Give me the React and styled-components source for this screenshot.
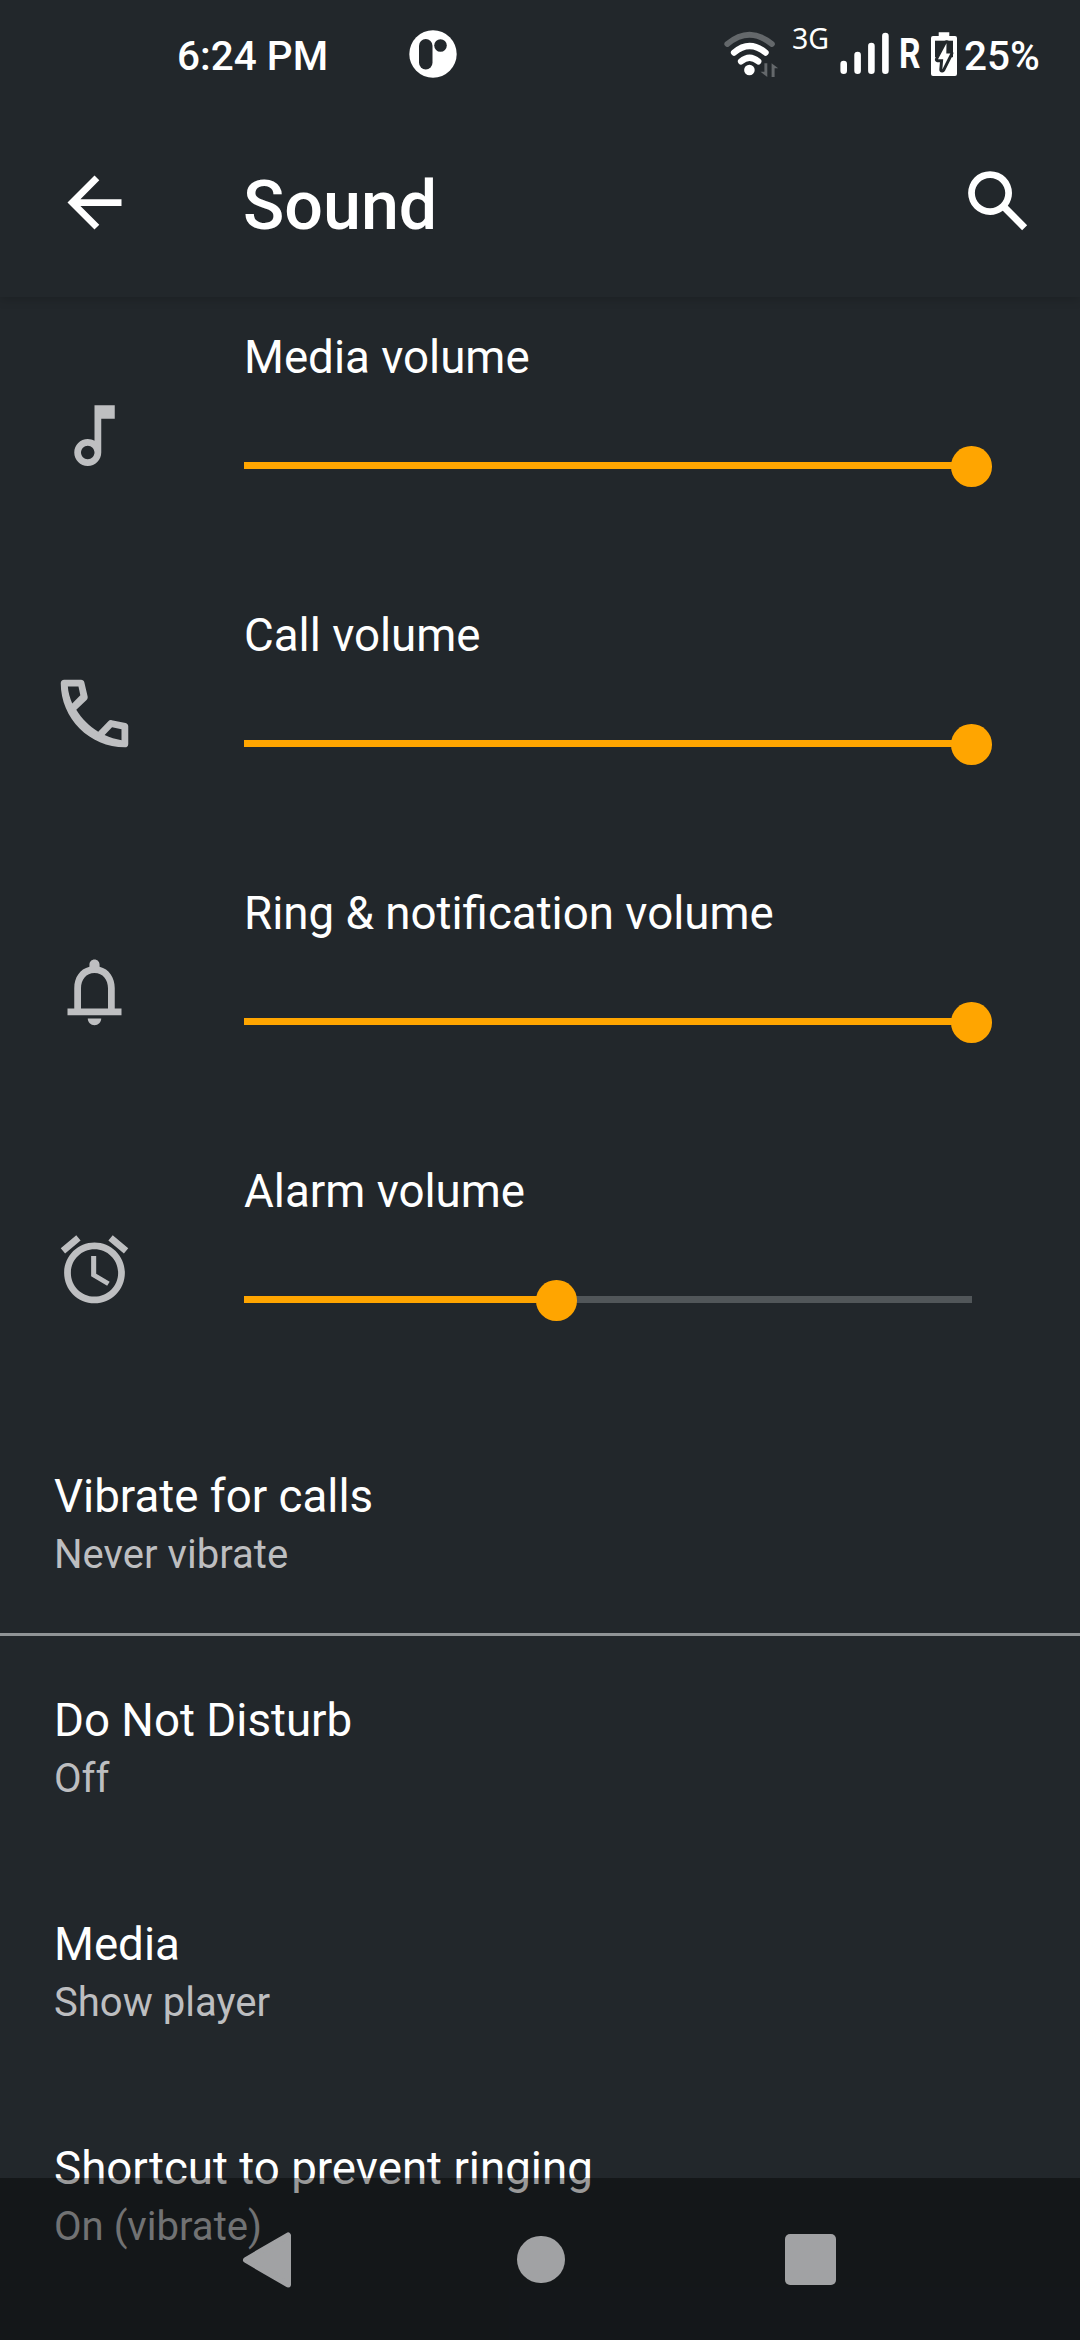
import React from 'react'
import styled, { createGlobalStyle } from 'styled-components'

const volumes = [
  { id: 'media', label: 'Media volume', value: 100, icon: 'music' },
  { id: 'call', label: 'Call volume', value: 100, icon: 'phone' },
  { id: 'ring', label: 'Ring & notification volume', value: 100, icon: 'bell' },
  { id: 'alarm', label: 'Alarm volume', value: 43, icon: 'alarm' },
]

const preferences = [
  { id: 'vibrate', title: 'Vibrate for calls', summary: 'Never vibrate' },
  { id: 'dnd', title: 'Do Not Disturb', summary: 'Off', divider: true },
  { id: 'player', title: 'Media', summary: 'Show player' },
  { id: 'shortcut', title: 'Shortcut to prevent ringing', summary: 'On (vibrate)' },
]

const icons = {
  back: 'M20 11H7.83l5.59-5.59L12 4l-8 8 8 8 1.41-1.41L7.83 13H20v-2z',
  search:
    'M20.49 19l-5.73-5.73C15.53 12.2 16 10.91 16 9.5A6.5 6.5 0 1 0 9.5 16c1.41 0 2.7-.47 3.77-1.24L19 20.49 20.49 19zM5 9.5C5 7.01 7.01 5 9.5 5S14 7.01 14 9.5 11.99 14 9.5 14 5 11.99 5 9.5z',
  music:
    'M12 3v10.55c-.59-.34-1.27-.55-2-.55-2.21 0-4 1.79-4 4s1.79 4 4 4 4-1.79 4-4V7h4V3h-6zM10 19c-1.1 0-2-.9-2-2s.9-2 2-2 2 .9 2 2-.9 2-2 2z',
  phone:
    'M3 2h5c.5 0 .9.3 1 .8l.95 4.1c.1.4 0 .8-.3 1.1L6.6 10.9c1.6 2.7 3.9 4.9 6.5 6.5l3-3.1c.3-.3.6-.4 1-.3l4.1.8c.5.1.8.5.8 1V21c0 .6-.4 1-1 1C10.6 22 2 13.4 2 3c0-.6.4-1 1-1zM4.1 4c.1 1.7.6 3.4 1.3 5l2.4-2.4L7.25 4H4.1zM20 16.7l-2.8-.65L15 18.4c1.6.8 3.3 1.3 5 1.5v-3.2z',
  bell:
    'M18 17v-6c0-3.07-1.63-5.64-4.5-6.32V4c0-.83-.67-1.5-1.5-1.5s-1.5.67-1.5 1.5v.68C7.64 5.36 6 7.92 6 11v6H4v2h16v-2h-2zm-2 0H8v-6c0-2.48 1.51-4.5 4-4.5s4 2.02 4 4.5v6zM12 22c1.1 0 2-.9 2-2h-4c0 1.1.89 2 2 2z',
  alarm:
    'M22 5.72l-4.6-3.86-1.29 1.53 4.6 3.86L22 5.72zM7.88 3.39L6.6 1.86 2 5.71l1.29 1.53 4.59-3.85zM12.5 8H11v6l4.75 2.85.75-1.23-4-2.37V8zM12 4c-4.97 0-9 4.03-9 9s4.02 9 9 9c4.97 0 9-4.03 9-9s-4.03-9-9-9zm0 16c-3.87 0-7-3.13-7-7s3.13-7 7-7 7 3.13 7 7-3.13 7-7 7z',
}

const Icon = ({ name }) => (
  <svg viewBox='0 0 24 24' width='81' height='81' fill='currentColor'>
    <path fillRule='evenodd' d={icons[name]} />
  </svg>
)

const AppLogo = () => (
  <svg width='48' height='48' viewBox='0 0 48 48'>
    <circle cx='24' cy='24' r='23.7' fill='#fff' />
    <rect x='10' y='9' width='13.5' height='30.5' rx='6.75' fill='#22272b' />
    <circle cx='31.5' cy='15.5' r='6.3' fill='#22272b' />
  </svg>
)

const Wifi = () => (
  <svg width='64' height='52' viewBox='720 28 64 52' fill='none' strokeLinecap='round'>
    <path d='M727.3 44Q749.5 25.5 771.9 44' stroke='#64686b' strokeWidth='5.8' />
    <path d='M734 52.6Q749.5 39.4 765.6 52.6' stroke='#fff' strokeWidth='6.2' />
    <path d='M741 61.4Q749.5 54 758.3 61.4' stroke='#fff' strokeWidth='6.2' />
    <circle cx='749.4' cy='70' r='5.3' fill='#fff' />
    <path d='M767.3 63.3V77L760.5 71.8H764.4V63.3zM771.6 77V63.3L778.2 68.2H774.6V77z' fill='#64686b' />
  </svg>
)

const Signal = () => (
  <svg width='52' height='52' viewBox='838 28 52 52' stroke='#fff' strokeWidth='6.6' strokeLinecap='round'>
    <path d='M843.7 64v6.8M857.6 55v15.8M871.4 46v24.8M885.4 36v34.8' />
  </svg>
)

const Battery = () => (
  <svg width='30' height='52' viewBox='929 28 30 52'>
    <path d='M938.7 32.3h10.6V36h5.7a2 2 0 0 1 2 2v36a2 2 0 0 1-2 2h-22a2 2 0 0 1-2-2V38a2 2 0 0 1 2-2h5.7z' fill='#fff' />
    <path d='M935 40.7h18v16.5H935z' fill='#22272b' />
    <path
      d='M946.5 43.3L938 59.3h5.2L942.3 69.5 950.3 53.4h-4z'
      fill='#fff'
      stroke='#22272b'
      strokeWidth='6'
      strokeLinejoin='round'
      paintOrder='stroke'
    />
  </svg>
)

const VolumeRow = ({ label, value, icon }) => (
  <VolumeWrapper>
    <VolumeIcon>
      <Icon name={icon} />
    </VolumeIcon>
    <div>
      <Title>{label}</Title>
      <Slider>
        <Track>
          <Fill style={{ width: `${value}%` }}>
            <Thumb />
          </Fill>
        </Track>
      </Slider>
    </div>
  </VolumeWrapper>
)

const App = () => {
  return (
    <>
      <GlobalStyle />
      <Screen>
        <StatusBar>
          <Clock>6:24 PM</Clock>
          <AppLogo />
          <Wifi />
          <Network>3G</Network>
          <Signal />
          <Roaming>R</Roaming>
          <Battery />
          <Clock>25%</Clock>
        </StatusBar>
        <AppBar>
          <Icon name='back' />
          <Heading>Sound</Heading>
          <SearchButton>
            <Icon name='search' />
          </SearchButton>
        </AppBar>
        <main>
          {volumes.map((volume) => (
            <VolumeRow key={volume.id} {...volume} />
          ))}
          <Preferences>
            {preferences.map(({ id, title, summary, divider }) => (
              <Preference key={id} $divider={divider}>
                <Title>{title}</Title>
                <Summary>{summary}</Summary>
              </Preference>
            ))}
          </Preferences>
        </main>
        <NavBar>
          <svg width='50' height='58' viewBox='0 0 50 58'>
            <path
              d='M4 29L46 4.5V53.5z'
              fill='#a1a2a4'
              stroke='#a1a2a4'
              strokeWidth='6'
              strokeLinejoin='round'
            />
          </svg>
          <HomeButton />
          <RecentsButton />
        </NavBar>
      </Screen>
    </>
  )
}

const GlobalStyle = createGlobalStyle`
  * {
    box-sizing: border-box;
  }
  body {
    margin: 0;
    background: #22272b;
    font-family: Roboto, sans-serif;
    color: #fff;
  }
  svg {
    display: block;
    flex-shrink: 0;
  }
`

const Screen = styled.div`
  position: relative;
  width: 1080px;
  height: 2340px;
  overflow: hidden;
`

const StatusBar = styled.header`
  display: grid;
  grid-template-columns: 232px 311px 72px 46px 61px 30px 35px 1fr;
  align-items: center;
  height: 108px;
  padding-left: 177px;
`

const Clock = styled.span`
  font-size: 40.5px;
  font-weight: 500;
  line-height: 48px;
  padding-top: 3px;
  white-space: nowrap;
`

const Network = styled.span`
  font-family: 'Noto Sans', sans-serif;
  font-size: 28.5px;
  line-height: 32px;
  margin-bottom: 32px;
`

const Roaming = styled.span`
  font-size: 42px;
  font-weight: 700;
  line-height: 48px;
  transform: scaleX(0.8);
  transform-origin: left;
`

const AppBar = styled.div`
  display: flex;
  align-items: center;
  height: 189px;
  padding: 0 41px 0 54px;
  box-shadow: 0 2px 10px rgba(0, 0, 0, 0.18);
  clip-path: inset(0 0 -20px 0);
`

const Heading = styled.h1`
  flex: 1;
  margin: 0 0 0 108px;
  font-size: 68.2px;
  font-weight: 500;
  line-height: 80px;
  padding-top: 7px;
`

const SearchButton = styled.div`
  margin-bottom: 2px;
`

const VolumeWrapper = styled.section`
  display: grid;
  grid-template-columns: 190px 728px;
  height: 278px;
  padding: 32px 0 0 54px;
`

const VolumeIcon = styled.div`
  padding-top: 66px;
  color: #bebfc1;
`

const Title = styled.div`
  font-size: 45.7px;
  line-height: 57px;
  white-space: nowrap;
`

const Summary = styled.div`
  margin-top: 6px;
  font-size: 40.1px;
  line-height: 48px;
  color: #bdbec0;
`

const Slider = styled.div`
  display: flex;
  align-items: center;
  height: 159px;
`

const Track = styled.div`
  width: 100%;
  height: 7px;
  background: #515659;
`

const Fill = styled.div`
  position: relative;
  height: 7px;
  background: #ffa500;
`

const Thumb = styled.div`
  position: absolute;
  top: -16px;
  right: -20px;
  width: 40.6px;
  height: 40.6px;
  border-radius: 50%;
  background: #ffa500;
`

const Preferences = styled.div`
  padding-top: 2px;
`

const Preference = styled.section`
  height: ${({ $divider }) => ($divider ? 226 : 224)}px;
  margin-top: ${({ $divider }) => ($divider ? -2 : 0)}px;
  padding: ${({ $divider }) => ($divider ? 56 : 57)}px 54px 0;
  border-top: ${({ $divider }) => ($divider ? '3px solid #909496' : 'none')};
`

const NavBar = styled.nav`
  position: absolute;
  left: 0;
  right: 0;
  bottom: 0;
  display: grid;
  grid-template-columns: 275px 268px 51px;
  align-items: center;
  height: 162px;
  padding: 1px 0 0 242px;
  background: rgba(0, 0, 0, 0.4);
`

const HomeButton = styled.div`
  width: 47.5px;
  height: 47.5px;
  border-radius: 50%;
  background: #a1a2a4;
`

const RecentsButton = styled.div`
  width: 51px;
  height: 51px;
  border-radius: 5px;
  background: #a1a2a4;
`

export default App
